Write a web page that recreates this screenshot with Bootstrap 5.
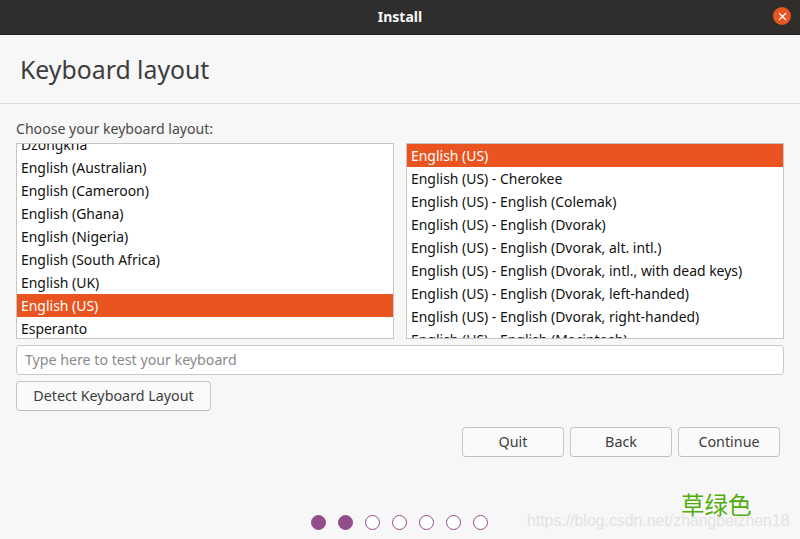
<!DOCTYPE html>
<html lang="en">
<head>
    <meta charset="UTF-8">
    <meta name="viewport" content="width=device-width, initial-scale=1.0">
    <title>Install</title>
    <link rel="stylesheet" href="https://cdn.jsdelivr.net/npm/bootstrap@5.3.0/dist/css/bootstrap.min.css">
    <style>
        html, body { height: 100%; }
        body { width: 800px; height: 539px; overflow: hidden; background: #f7f7f7; color: #3d3d3d; font-family: "Noto Sans", "Open Sans", sans-serif; font-size: 14px; position: relative; }
        .title-bar { height: 35px; padding-bottom: 2px; background: #302d2d; border-bottom: 1px solid #201e1e; color: #f7f7f7; font-weight: 700; font-size: 14px; position: relative; }
        .close-x { position: absolute; top: 7px; right: 9px; width: 18px; height: 18px; border-radius: 50%; background: #e95420; display: flex; align-items: center; justify-content: center; }
        .page-head { height: 69px; border-bottom: 1px solid #dcdcdc; padding: 14px 20px 0; }
        .page-head h1 { font-size: 24.8px; font-weight: 400; line-height: 40px; margin: 0; color: #3d3d3d; }
        .main-area { padding: 0 16px; }
        .choose-label { height: 39px; padding-top: 15px; line-height: 20px; font-size: 14.1px; color: #4a4a4a; }
        .layout-lists { display: flex; gap: 12px; height: 196px; }
        .layout-list { width: 378px; height: 196px; overflow: hidden; border: 1px solid #c6c6c6; background: #fff; border-radius: 0; flex-wrap: nowrap; }
        .layout-list .list-group-item { height: 23px; flex: none; line-height: 23px; padding: 0 4px; border: 0; border-radius: 0; font-size: 13.95px; color: #111; background: transparent; white-space: nowrap; }
        .layout-list .list-group-item.active { background: #e95420; color: #fff; margin: 0; }
        .list-scrolled .list-group-item:first-child { margin-top: -11px; }
        .test-input { height: 30px; margin-top: 6px; border: 1px solid #c9c9c9; border-radius: 4px; font-size: 14.2px; padding: 0 8px 2px; color: #333; font-family: inherit; box-shadow: none; }
        .test-input::placeholder { color: #8a8a8a; opacity: 1; }
        .gtk-btn { height: 30px; padding: 0 0 1px; border: 1px solid #c6c6c6; border-bottom-color: #bdbdbd; border-radius: 4px; background: #fafafa; color: #3d3d3d; font-size: 14.3px; line-height: 27px; font-family: inherit; }
        .gtk-btn:hover { background: #fafafa; color: #3d3d3d; border-color: #c6c6c6; }
        .detect-btn { width: 195px; margin-top: 6px; }
        .nav-buttons { margin-top: 16px; padding-right: 4px; gap: 6px; }
        .nav-buttons .gtk-btn { width: 102px; }
        .step-dots { position: absolute; left: 311px; top: 515px; display: flex; gap: 12px; }
        .step-dot { width: 15px; height: 15px; border-radius: 50%; border: 1px solid #924d8b; background: #fff; }
        .step-dot.done { background: #924d8b; }
        .mark-cn { position: absolute; left: 681px; top: 487px; font-size: 23.5px; line-height: 34px; color: #4fae0a; font-family: "Noto Sans CJK SC", sans-serif; }
        .mark-url { position: absolute; left: 527px; top: 511px; font-size: 15.85px; line-height: 20px; color: rgba(205,205,205,.5); font-family: "Liberation Sans", sans-serif; white-space: nowrap; }
    </style>
</head>
<body>

<!-- Title bar -->
<div class="title-bar d-flex align-items-center justify-content-center">
    <span>Install</span>
    <div class="close-x">
        <svg width="9" height="9" viewBox="0 0 9 9"><path d="M1 1L8 8M8 1L1 8" stroke="#fff" stroke-width="1.3" fill="none"/></svg>
    </div>
</div>

<div class="page-head">
    <h1>Keyboard layout</h1>
</div>

<div class="main-area">
    <div class="choose-label">Choose your keyboard layout:</div>

    <div class="layout-lists">
        <div class="list-group layout-list list-scrolled">
            <div class="list-group-item">Dzongkha</div>
            <div class="list-group-item">English (Australian)</div>
            <div class="list-group-item">English (Cameroon)</div>
            <div class="list-group-item">English (Ghana)</div>
            <div class="list-group-item">English (Nigeria)</div>
            <div class="list-group-item">English (South Africa)</div>
            <div class="list-group-item">English (UK)</div>
            <div class="list-group-item active">English (US)</div>
            <div class="list-group-item">Esperanto</div>
        </div>
        <div class="list-group layout-list">
            <div class="list-group-item active">English (US)</div>
            <div class="list-group-item">English (US) - Cherokee</div>
            <div class="list-group-item">English (US) - English (Colemak)</div>
            <div class="list-group-item">English (US) - English (Dvorak)</div>
            <div class="list-group-item">English (US) - English (Dvorak, alt. intl.)</div>
            <div class="list-group-item">English (US) - English (Dvorak, intl., with dead keys)</div>
            <div class="list-group-item">English (US) - English (Dvorak, left-handed)</div>
            <div class="list-group-item">English (US) - English (Dvorak, right-handed)</div>
            <div class="list-group-item">English (US) - English (Macintosh)</div>
        </div>
    </div>

    <input type="text" class="form-control test-input" placeholder="Type here to test your keyboard">
    <button class="btn gtk-btn detect-btn d-block">Detect Keyboard Layout</button>

    <div class="d-flex justify-content-end nav-buttons">
        <button class="btn gtk-btn">Quit</button>
        <button class="btn gtk-btn">Back</button>
        <button class="btn gtk-btn">Continue</button>
    </div>
</div>

<!-- Progress dots -->
<div class="step-dots">
    <div class="step-dot done"></div>
    <div class="step-dot done"></div>
    <div class="step-dot"></div>
    <div class="step-dot"></div>
    <div class="step-dot"></div>
    <div class="step-dot"></div>
    <div class="step-dot"></div>
</div>

<!-- Watermarks -->
<div class="mark-cn">草绿色</div>
<div class="mark-url">https://blog.csdn.net/zhangbeizhen18</div>

<script src="https://cdn.jsdelivr.net/npm/bootstrap@5.3.0/dist/js/bootstrap.bundle.min.js"></script>
</body>
</html>
